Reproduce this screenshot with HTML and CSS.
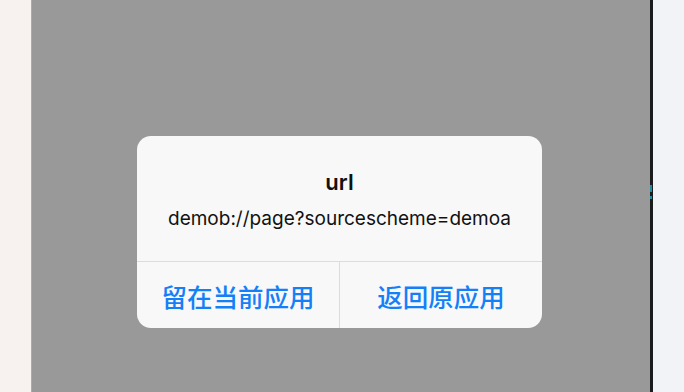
FILE: index.html
```html
<!DOCTYPE html>
<html lang="zh">
<head>
<meta charset="utf-8">
<title>url</title>
<link rel="stylesheet" href="styles.css">
</head>
<body>
<div class="screen">
  <div class="side side-left"></div>
  <div class="overlay">
    <div class="alert">
      <div class="alert-body">
        <div class="alert-title">url</div>
        <div class="alert-message">demob://page?sourcescheme=demoa</div>
      </div>
      <div class="alert-actions">
        <div class="action">留在当前应用</div>
        <div class="action action-right">返回原应用</div>
      </div>
    </div>
  </div>
  <div class="frame-edge">
    <span class="edge-mark mark-a"></span>
    <span class="edge-mark mark-b"></span>
  </div>
  <div class="side side-right"></div>
</div>
</body>
</html>
```

FILE: styles.css
```css
* { box-sizing: border-box; }
html, body {
  margin: 0;
  padding: 0;
  width: 684px;
  height: 392px;
  overflow: hidden;
}
body {
  font-family: Inter, "Noto Sans CJK SC", sans-serif;
}
.screen {
  display: flex;
  width: 684px;
  height: 392px;
}
.side {
  width: 31px;
  flex: none;
}
.side-left { background: #f7f1f0; }
.side-right { background: #f2f3f6; }
.overlay {
  flex: 1;
  background: #999999;
  border-left: 1px solid #ababab;
  padding-top: 136px;
  padding-left: 105px;
}
.frame-edge {
  width: 3px;
  flex: none;
  background: #1c1c1e;
  position: relative;
}
.edge-mark {
  position: absolute;
  left: 0;
  width: 2px;
  background: #1f8da0;
}
.mark-a { top: 185px; height: 7px; }
.mark-b { top: 196px; height: 3px; }
.alert {
  width: 405px;
  height: 192px;
  background: #f8f8f8;
  border-radius: 14px;
  overflow: hidden;
  display: flex;
  flex-direction: column;
}
.alert-body {
  height: 126px;
  border-bottom: 1px solid #dcdcdc;
  padding-top: 35px;
  text-align: center;
  color: #111111;
}
.alert-title {
  font-size: 22px;
  font-weight: 600;
  line-height: 22px;
}
.alert-message {
  font-size: 19px;
  line-height: 22px;
  margin-top: 15px;
}
.alert-actions {
  flex: 1;
  display: flex;
}
.action {
  flex: 1;
  display: flex;
  align-items: center;
  justify-content: center;
  font-family: "Noto Sans CJK SC", sans-serif;
  font-size: 25.5px;
  font-weight: 500;
  color: #1480f8;
}
.action-right {
  border-left: 1px solid #dcdcdc;
}
```
